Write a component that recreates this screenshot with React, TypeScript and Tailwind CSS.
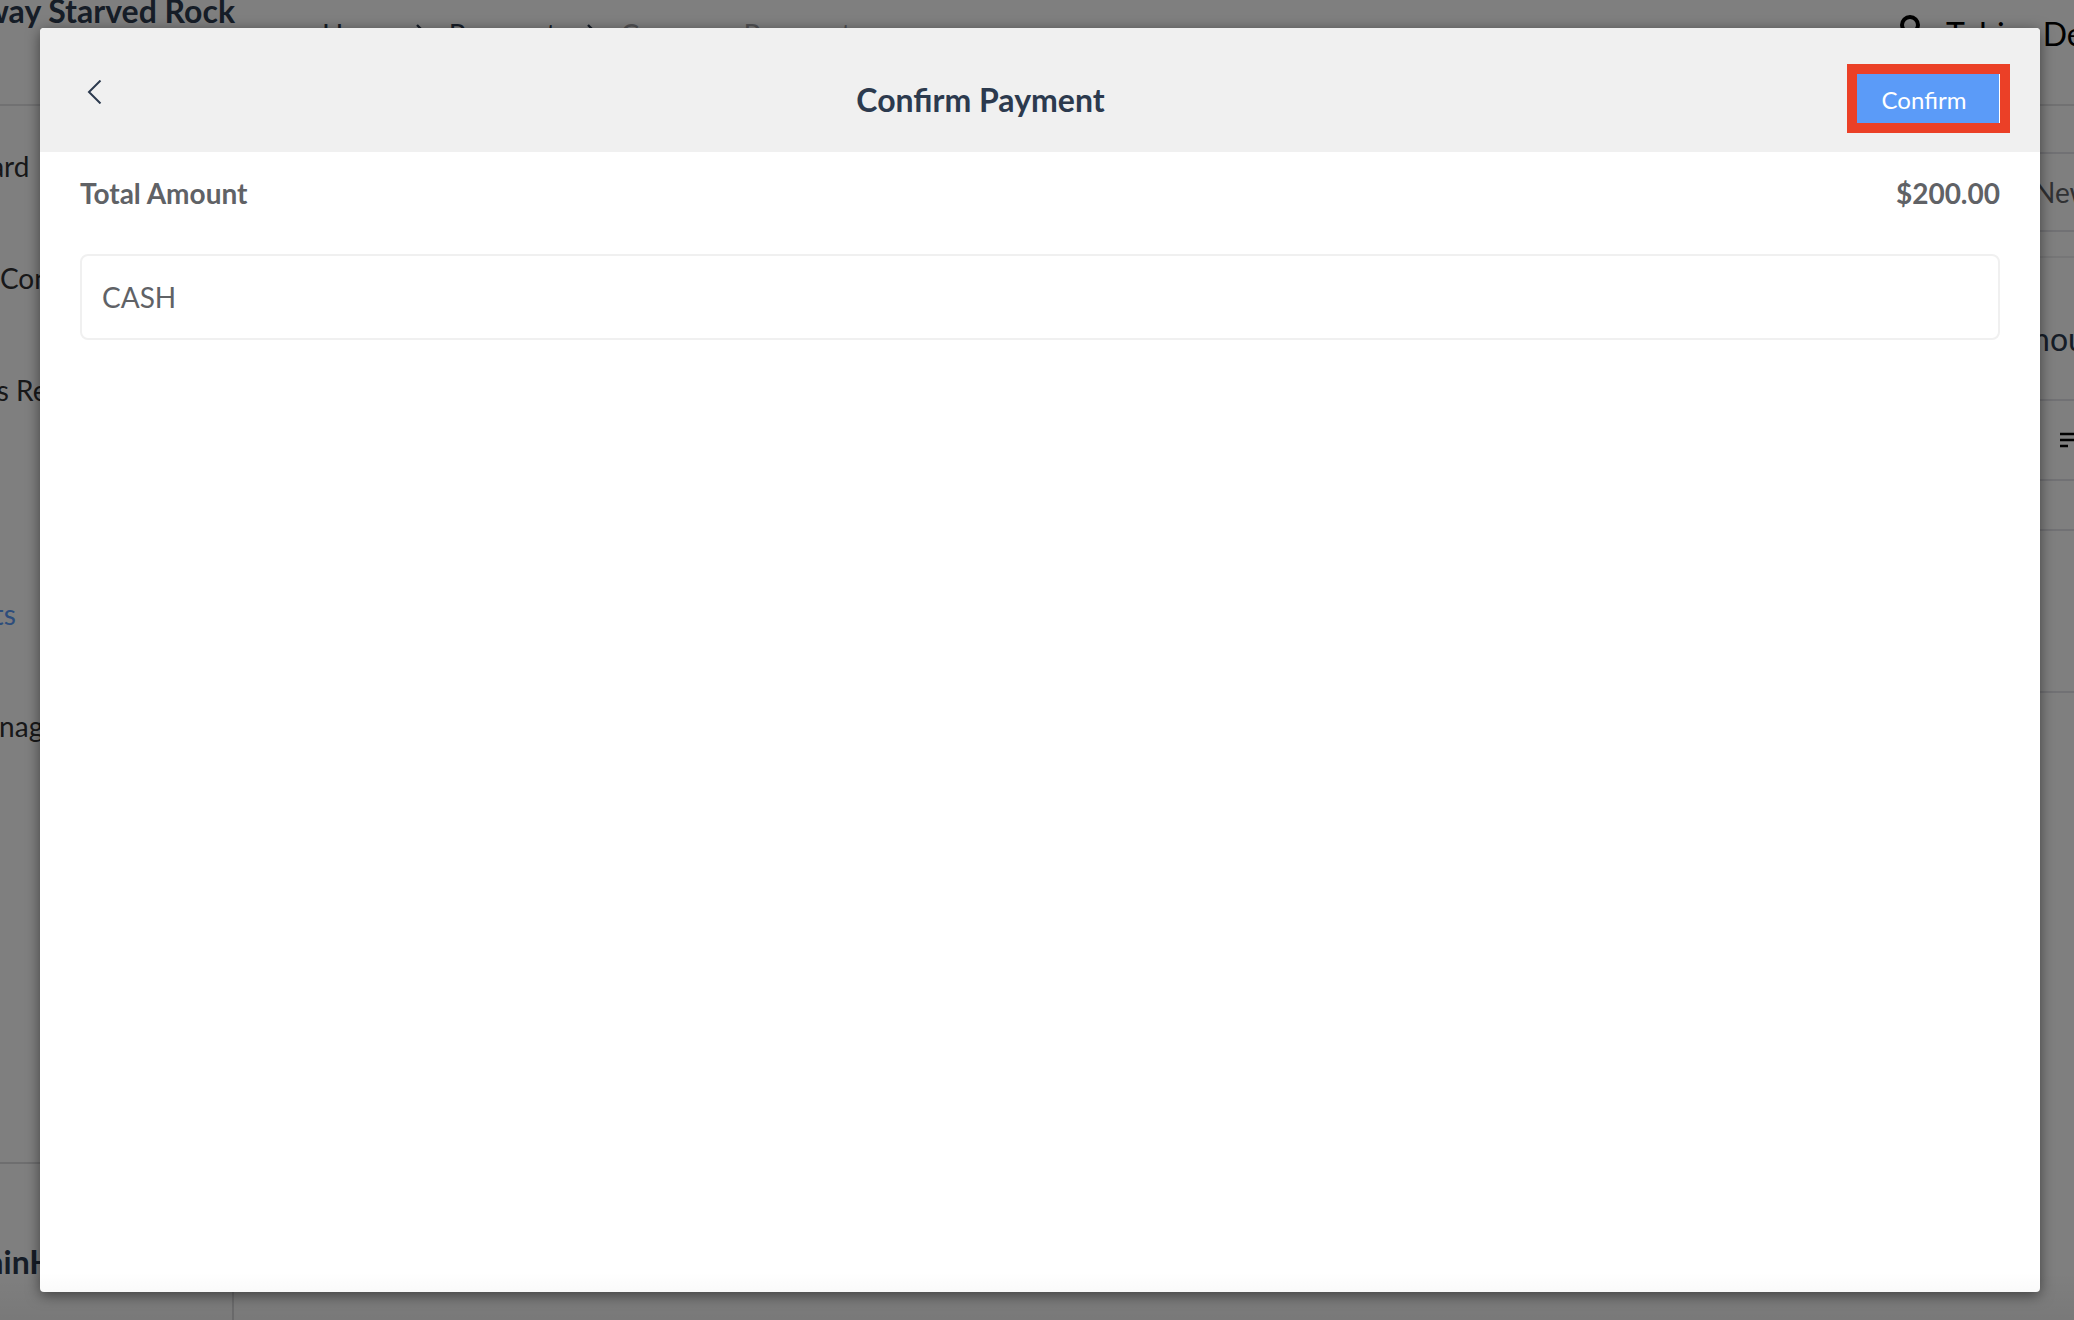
import React, { useState } from 'react';

const NAV_ITEMS = [
  { id: 'dashboard', label: 'Dashboard' },
  { id: 'config', label: 'Product Configuration' },
  { id: 'reports', label: 'Bookings Reports' },
  { id: 'rooms', label: 'Rooms' },
  { id: 'payments', label: 'Payments' },
  { id: 'users', label: 'User Management' },
];

const ChevronLeftIcon: React.FC = () => (
  <svg viewBox="0 0 24 24" className="w-6 h-6" fill="none" stroke="currentColor" strokeWidth="2">
    <path d="M20.5 0.5 9 12l11.5 11.5" />
  </svg>
);

const CrumbSeparator: React.FC = () => (
  <svg viewBox="0 0 20 40" className="w-5 h-10 shrink-0" fill="none" stroke="currentColor" strokeWidth="2.4">
    <path d="M4 11l9 9-9 9" />
  </svg>
);

const UserIcon: React.FC = () => (
  <svg viewBox="0 0 32 36" className="w-8 h-9 shrink-0" fill="none" stroke="currentColor" strokeWidth="4">
    <circle cx="16" cy="11" r="8" />
    <path d="M3 34c0-8 5-12 13-12s13 4 13 12" />
  </svg>
);

const SortIcon: React.FC = () => (
  <svg viewBox="0 0 24 16" className="w-6 h-4 shrink-0" stroke="currentColor" strokeWidth="2.4">
    <path d="M0 2h24M0 8h16M0 14h8" />
  </svg>
);

const TopBar: React.FC = () => (
  <header className="flex h-[106px] shrink-0 items-start border-b-2 border-[#e2e2e4]">
    <h1 className="-mt-[9px] -ml-25 w-[422px] shrink-0 whitespace-nowrap text-[32px] leading-10 font-bold text-[#2c3a4e]">
      <span className="block w-[335px] text-right">Fairway Starved Rock</span>
    </h1>
    <nav
      aria-label="Breadcrumb"
      className="mt-[14px] flex gap-4 whitespace-nowrap text-[28px] leading-10 text-[#2c3a4e]"
    >
      <a href="#home">Home</a>
      <CrumbSeparator />
      <a href="#payments">Payments</a>
      <CrumbSeparator />
      <span className="text-[#a0a0a4]">Company Payment</span>
    </nav>
    <div className="ml-auto flex w-[180px] shrink-0 gap-5 pt-[14px]">
      <UserIcon />
      <span className="whitespace-nowrap text-[32px] leading-10">Tobias Dean</span>
    </div>
  </header>
);

const Sidebar: React.FC = () => (
  <aside className="flex w-[234px] shrink-0 flex-col overflow-hidden border-r-2 border-[#dcdcde]">
    <nav aria-label="Main" className="-ml-26 flex-1">
      {NAV_ITEMS.map((item) => (
        <a
          key={item.id}
          href={`#${item.id}`}
          className={`flex h-28 items-start whitespace-nowrap pt-10 text-[28px] leading-10 ${
            item.id === 'payments' ? 'text-[#5b9bf8]' : 'text-[#303133]'
          }`}
        >
          {item.label}
        </a>
      ))}
    </nav>
    <div className="h-[158px] border-t-2 border-[#dcdcde] pt-[78px] text-[32px] leading-10 font-bold text-[#2c3a4e]">
      <span className="-ml-20">CaptainHub</span>
    </div>
  </aside>
);

const PageContent: React.FC = () => (
  <main className="flex min-w-0 flex-1 flex-col text-[#2c3a4e]">
    <div className="h-12 border-b-2 border-[#e2e2e8]" />
    <div className="flex h-[78px] items-center justify-end border-b-2 border-[#e2e2e8] text-[28px] text-[#606266]">
      <span className="w-10 whitespace-nowrap">New</span>
    </div>
    <div className="h-[26px] border-b-2 border-[#ececee]" />
    <div className="flex h-[143px] items-center justify-end border-b-2 border-[#e2e2e8] pt-5 text-[32px]">
      <span className="w-18 whitespace-nowrap">Amount</span>
    </div>
    <div className="flex h-20 items-center justify-end border-b-2 border-[#e2e2e8] text-black">
      <span className="w-[14px]">
        <SortIcon />
      </span>
    </div>
    <div className="h-[50px] border-b-2 border-[#e2e2e8]" />
    <div className="h-[162px] border-b-2 border-[#e2e2e8]" />
  </main>
);

const ConfirmPaymentDialog: React.FC = () => {
  const [method] = useState('CASH');

  return (
    <section
      role="dialog"
      aria-modal="true"
      aria-labelledby="dialog-title"
      className="flex flex-1 flex-col overflow-hidden rounded-sm bg-white shadow-[0_3px_14px_rgba(0,0,0,0.5)]"
    >
      <header className="flex h-31 shrink-0 items-start justify-between bg-[#f0f0f0] px-10 pt-[46px]">
        <button type="button" aria-label="Back" className="pt-1.5 text-[#2c3a4e]">
          <ChevronLeftIcon />
        </button>
        <h2 id="dialog-title" className="pt-1.5 text-[32px] leading-10 font-bold text-[#2c3a4e]">
          Confirm Payment
        </h2>
        <button
          type="button"
          className="h-[49px] w-[143px] border-r border-white bg-[#5b9bf8] pt-0.5 pr-2 text-2xl text-white outline-10 outline-[#eb4027]"
        >
          Confirm
        </button>
      </header>

      <div className="flex flex-1 flex-col gap-[41px] px-10 pt-[21px] text-[28px] leading-10 text-[#606266]">
        <div className="flex items-center justify-between font-bold">
          <span>Total Amount</span>
          <span>$200.00</span>
        </div>
        <input
          type="text"
          readOnly
          aria-label="Payment method"
          value={method}
          className="h-[86px] w-full rounded-lg border-2 border-[#f0f0f0] px-5 outline-none"
        />
      </div>
    </section>
  );
};

export default function App() {
  return (
    <div className="relative h-screen overflow-hidden bg-white font-['Lato',sans-serif]">
      <div className="flex h-full flex-col">
        <TopBar />
        <div className="flex min-h-0 flex-1">
          <Sidebar />
          <PageContent />
        </div>
      </div>

      {/* Dimmed backdrop with the dialog on top */}
      <div className="absolute inset-0 flex bg-black/50 py-7 pr-[34px] pl-10">
        <ConfirmPaymentDialog />
      </div>

      {/* Soft fade along the bottom edge */}
      <div className="pointer-events-none absolute inset-x-0 bottom-0 h-12 bg-gradient-to-t from-black/5 to-transparent" />
    </div>
  );
}
